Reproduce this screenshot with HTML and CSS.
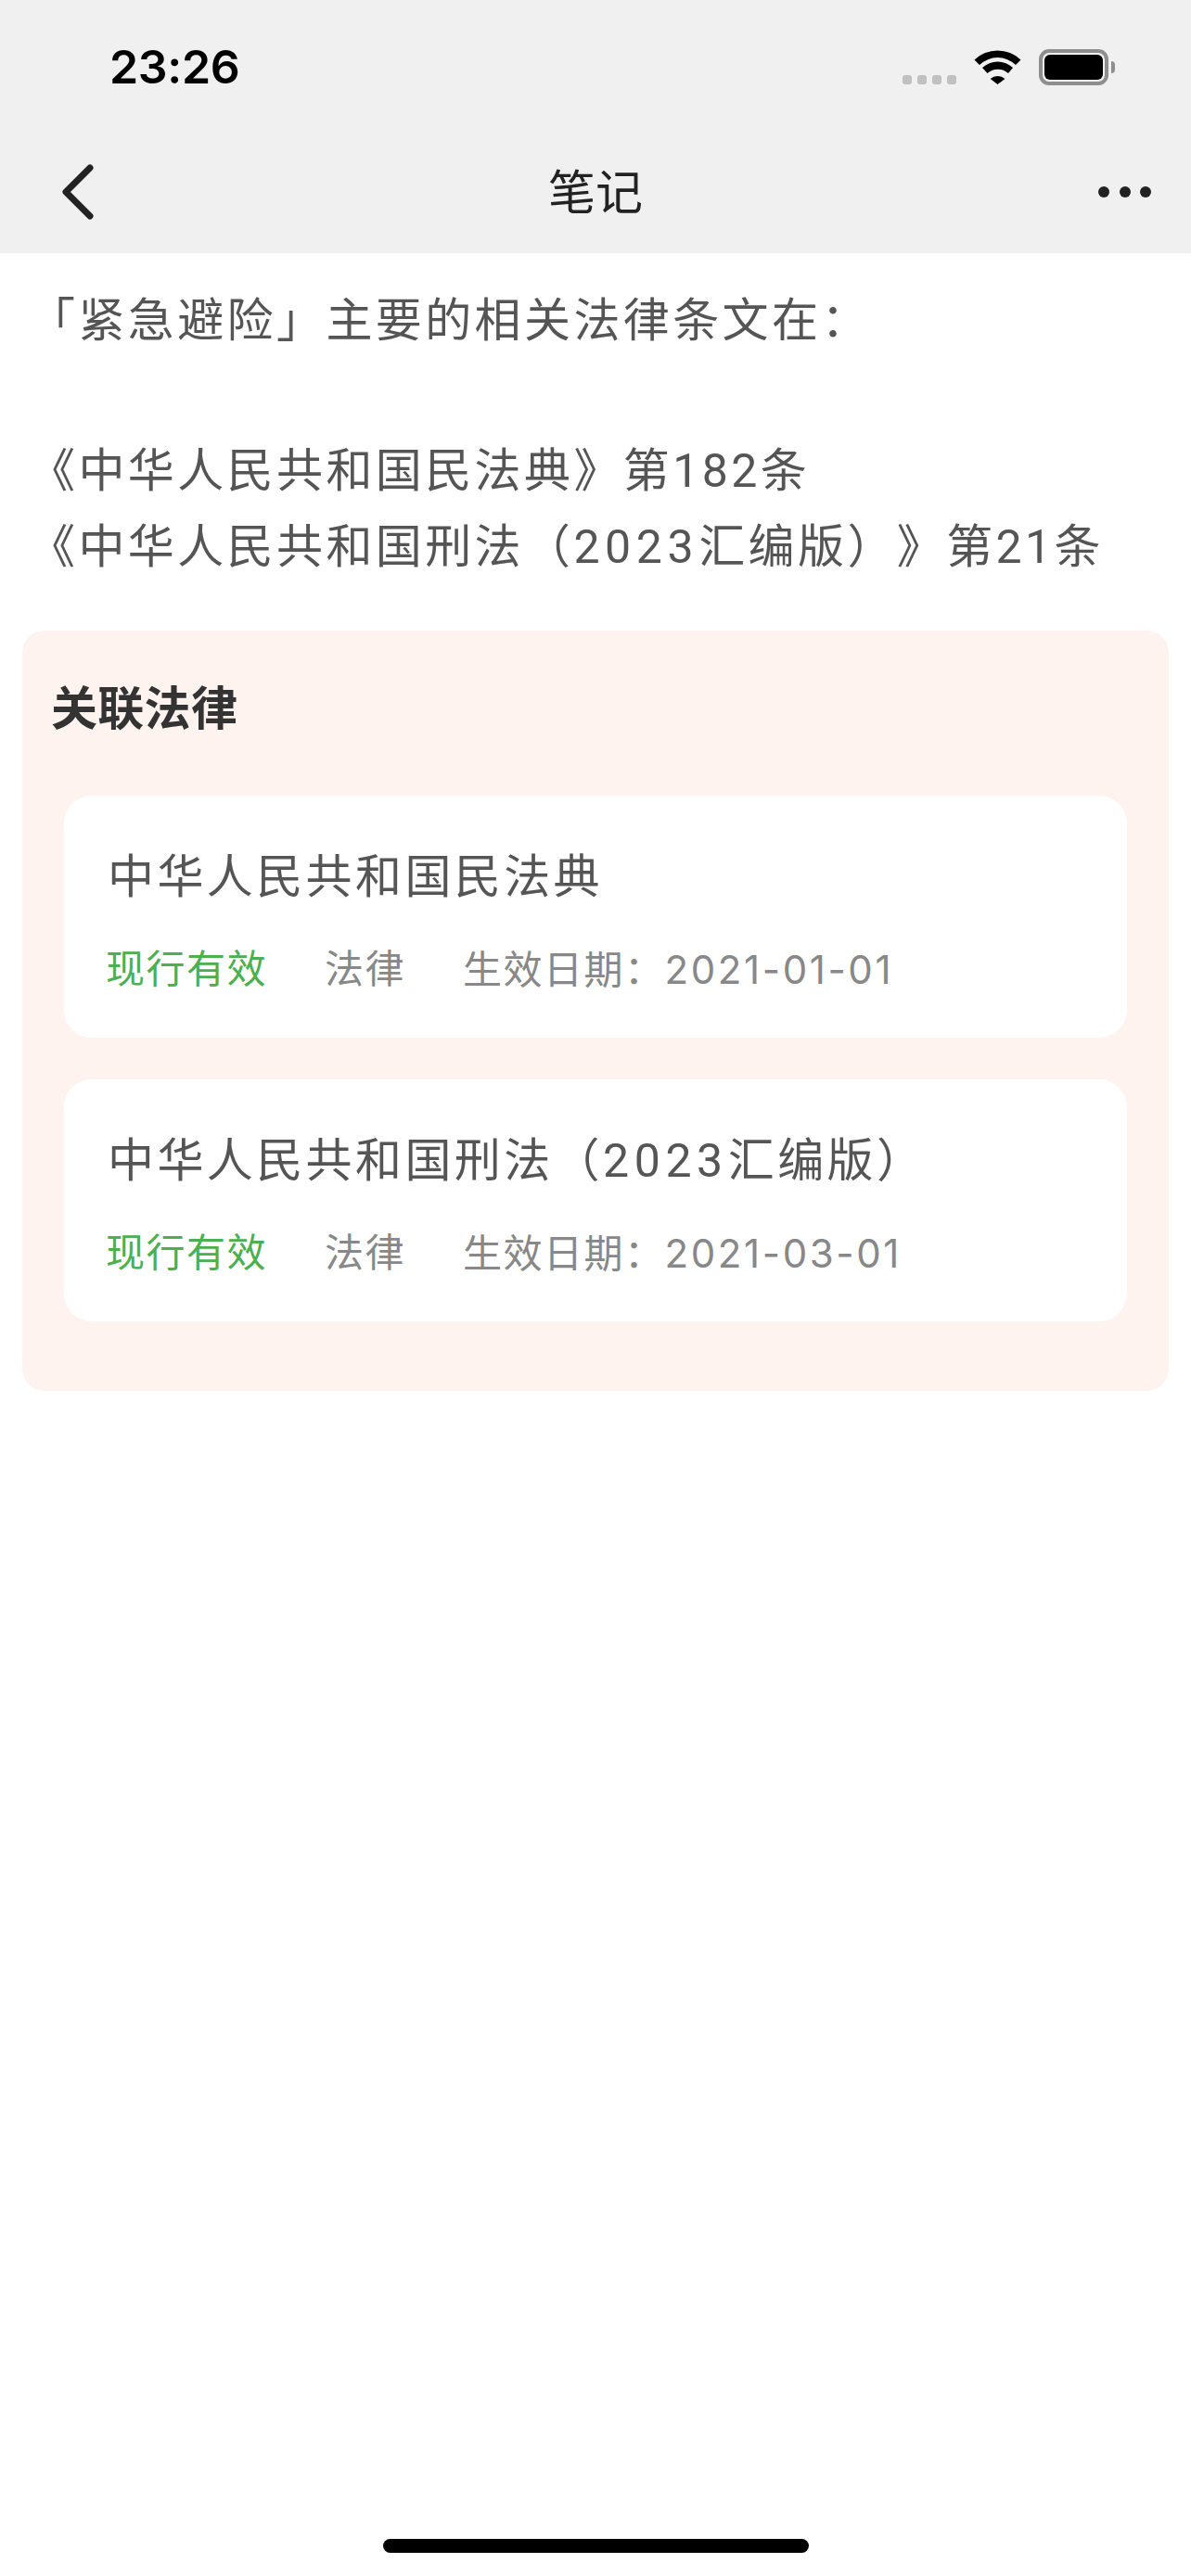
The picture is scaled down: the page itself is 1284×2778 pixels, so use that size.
FILE: index.html
```html
<!DOCTYPE html>
<html lang="zh-CN">
<head>
<meta charset="utf-8">
<title>笔记</title>
<link rel="stylesheet" href="styles.css">
</head>
<body>
<div class="page">
  <header class="top">
    <div class="status">
      <span class="time">23:26</span>
      <div class="status-icons">
        <div class="signal"><i></i><i></i><i></i><i></i></div>
        <svg class="wifi" width="51" height="37" viewBox="0 0 51 37"><path d="M0.5 10.5A36 36 0 0 1 50.5 10.5L45 16A28 28 0 0 0 6 16Z"/><path d="M9 19A24 24 0 0 1 42 19L37 25A17 17 0 0 0 14.5 25Z"/><path d="M17.7 31A12 12 0 0 1 33.5 31L25.5 37Z"/></svg>
        <div class="battery"><div class="battery-body"><div class="battery-fill"></div></div><div class="battery-nub"></div></div>
      </div>
    </div>
    <nav class="nav">
      <svg class="back" width="40" height="64" viewBox="0 0 40 64"><path d="M33 6L7 32L33 58"/></svg>
      <h1 class="nav-title">笔记</h1>
      <div class="more"><i></i><i></i><i></i></div>
    </nav>
  </header>
  <main class="content">
    <p class="note">「紧急避险」主要的相关法律条文在：<br><br>《中华人民共和国民法典》第182条<br>《中华人民共和国刑法（<span class="year">2023</span>汇编版）》第21条</p>
    <section class="panel">
      <h2 class="panel-title">关联法律</h2>
      <div class="cards">
        <article class="card">
          <div class="card-title">中华人民共和国民法典</div>
          <div class="meta"><span class="valid">现行有效</span><span>法律</span><span>生效日期：<span class="date">2021-01-01</span></span></div>
        </article>
        <article class="card">
          <div class="card-title">中华人民共和国刑法（<span class="year">2023</span>汇编版）</div>
          <div class="meta"><span class="valid">现行有效</span><span>法律</span><span>生效日期：<span class="date">2021-03-01</span></span></div>
        </article>
      </div>
    </section>
  </main>
  <div class="home"></div>
</div>
</body>
</html>
```
FILE: styles.css
```css
* { box-sizing: border-box; }
html, body { margin: 0; padding: 0; background: #fff; }
body { font-family: "Roboto", "Noto Sans CJK SC", sans-serif; text-spacing-trim: space-all; }
.page { width: 1284px; height: 2778px; display: flex; flex-direction: column; overflow: hidden; }

.top { height: 273px; background: #f0f0f0; flex: none; }
.status { height: 143px; display: flex; justify-content: space-between; align-items: flex-start; padding: 53px 82px 0 118px; }
.time { font-family: "Inter", sans-serif; font-weight: 600; font-size: 50px; line-height: 38px; color: #000; letter-spacing: -0.3px; }
.status-icons { display: flex; align-items: flex-start; }
.signal { display: flex; gap: 6px; margin-top: 28px; margin-right: 19px; }
.signal i { display: block; width: 10px; height: 10px; border-radius: 3px; background: #c0c0c0; }
.wifi { display: block; fill: #000; margin-top: 1px; margin-right: 19px; }
.battery { display: flex; align-items: center; height: 39px; }
.battery-body { width: 75px; height: 39px; border: 4px solid #8e8e8e; border-radius: 11px; padding: 2px; }
.battery-fill { width: 100%; height: 100%; background: #000; border-radius: 6px; }
.battery-nub { width: 4px; height: 13px; margin-left: 3px; background: #8e8e8e; border-radius: 0 7px 7px 0; }

.nav { height: 128px; display: grid; grid-template-columns: 1fr auto 1fr; align-items: center; padding: 0 43px; }
.back { display: block; fill: none; stroke: #222; stroke-width: 7; stroke-linecap: round; stroke-linejoin: round; margin-left: 21px; }
.nav-title { margin: 0 0 6px; font-family: "Noto Sans CJK SC", sans-serif; font-size: 51px; font-weight: 400; line-height: 68px; color: #222; }
.more { justify-self: end; display: flex; gap: 10.5px; }
.more i { display: block; width: 12px; height: 12px; border-radius: 50%; background: #222; }

.content { flex: 1; padding: 33px 24px 0; }
.note { margin: 0 0 49px; padding-left: 7px; font-size: 50px; line-height: 81.2px; letter-spacing: 3.4px; color: #555; white-space: nowrap; }
.year { letter-spacing: 5.6px; }

.panel { background: #fef3ef; border-radius: 24px; padding: 46px 45px 75px 45px; }
.panel-title { margin: 0 0 64px -14px; font-family: "Noto Sans CJK SC", sans-serif; font-size: 50px; font-weight: 700; line-height: 68px; letter-spacing: 0.3px; color: #333; }
.cards { display: flex; flex-direction: column; gap: 45px; }
.card { background: #fff; border-radius: 30px; height: 261px; padding: 54px 46px 0 47px; }
.card-title { font-size: 50px; line-height: 68px; letter-spacing: 3.4px; color: #555; white-space: nowrap; }
.meta { margin-top: 36px; margin-left: -2px; display: flex; gap: 62px; font-size: 42px; line-height: 60px; letter-spacing: 1.5px; color: #888; white-space: nowrap; }
.valid { color: #4caf50; }
.date { font-family: "Inter", sans-serif; letter-spacing: 2.6px; }

.home { flex: none; width: 459px; height: 15px; border-radius: 8px; background: #000; margin: 0 auto 25px; }
```
